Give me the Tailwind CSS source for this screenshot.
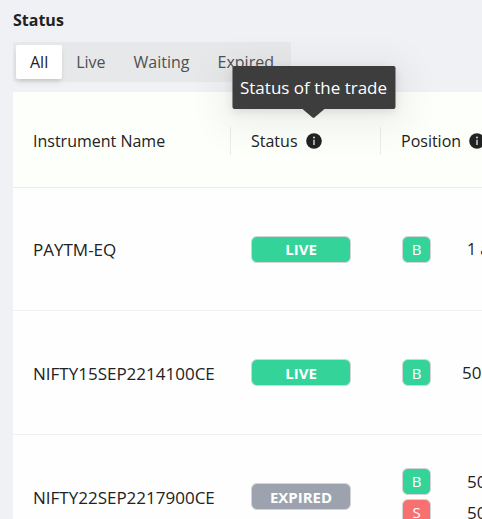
<!DOCTYPE html>
<html lang="en">
<head>
<meta charset="utf-8">
<meta name="viewport" content="width=device-width, initial-scale=1">
<title>Trades</title>
<script src="https://cdn.jsdelivr.net/npm/@tailwindcss/browser@4"></script>
</head>
<body class="h-screen overflow-hidden bg-[#f0f1f5] font-['Open_Sans','Noto_Sans',sans-serif] text-[17px] leading-7 text-[#222]">
<main class="pt-[6px] pl-[13px]">
  <fieldset>
    <legend class="text-base leading-7 font-bold">Status</legend>
    <div class="mt-2 inline-flex rounded-xs bg-[#e6e8e9] p-[3px] align-top text-base text-[#505050]">
      <label class="flex h-[34px] cursor-pointer items-center rounded-xs px-[14px] has-checked:bg-white has-checked:text-[#222] has-checked:shadow-md"><input type="radio" name="status" class="sr-only" checked>All</label>
      <label class="flex h-[34px] cursor-pointer items-center rounded-xs px-[14px] has-checked:bg-white has-checked:text-[#222] has-checked:shadow-md"><input type="radio" name="status" class="sr-only">Live</label>
      <label class="flex h-[34px] cursor-pointer items-center rounded-xs px-[14px] has-checked:bg-white has-checked:text-[#222] has-checked:shadow-md"><input type="radio" name="status" class="sr-only">Waiting</label>
      <label class="flex h-[34px] cursor-pointer items-center rounded-xs px-[14px] has-checked:bg-white has-checked:text-[#222] has-checked:shadow-md"><input type="radio" name="status" class="sr-only">Expired</label>
    </div>
  </fieldset>

  <table class="mt-[10px] w-full table-fixed border-separate border-spacing-0 bg-[#fefefe] text-left whitespace-nowrap">
    <colgroup><col class="w-[218px]"><col class="w-[150px]"><col></colgroup>
    <thead class="bg-[#fdfffb] text-base leading-7">
      <tr class="h-24">
        <th class="border-b border-[#ebecec] pt-[2px] pl-5 font-normal"><div class="border-r border-[#ebecec]">Instrument Name</div></th>
        <th class="border-b border-[#ebecec] pt-[2px] pl-5 font-normal">
          <div class="flex items-center gap-2 border-r border-[#ebecec]">Status
            <button type="button" class="relative" aria-label="About status" aria-describedby="status-tip">
              <svg class="block size-4" viewBox="0 0 16 16"><circle cx="8" cy="8" r="7.8" fill="#222"/><circle cx="8" cy="4.6" r="1" fill="#ddd"/><path d="M7.3 6.8h1.4V12H7.3z" fill="#ddd"/></svg>
              <span id="status-tip" role="tooltip" class="absolute bottom-10 left-1/2 -translate-x-1/2 rounded-xs bg-[#3d3d3d] px-2 py-2 text-[17px] leading-[27px] text-white shadow-[0_8px_36px_12px_rgba(0,0,0,0.06),0_3px_10px_rgba(0,0,0,0.10)]">Status of the trade
                <svg class="absolute top-full left-1/2 h-[9px] w-[22px] -translate-x-1/2" viewBox="0 0 22 9"><path d="M0 0h22L12 8.6q-1 .8-2 0z" fill="#3d3d3d"/></svg>
              </span>
            </button>
          </div>
        </th>
        <th class="border-b border-[#ebecec] pt-[2px] pl-5 font-normal">
          <div class="flex items-center gap-2">Position
            <button type="button" class="shrink-0" aria-label="About position">
              <svg class="block size-4" viewBox="0 0 16 16"><circle cx="8" cy="8" r="7.8" fill="#222"/><circle cx="8" cy="4.6" r="1" fill="#ddd"/><path d="M7.3 6.8h1.4V12H7.3z" fill="#ddd"/></svg>
            </button>
          </div>
        </th>
      </tr>
    </thead>
    <tbody>
      <tr class="h-[123px]">
        <td class="border-b border-[#f0f0f0] pt-[2px] pl-5">PAYTM-EQ</td>
        <td class="border-b border-[#f0f0f0] pl-5"><span class="flex h-[27px] w-[100px] items-center justify-center rounded-md border border-[#d4d4d8] bg-[#34d399] text-[15px] font-bold text-white">LIVE</span></td>
        <td class="border-b border-[#f0f0f0] pl-[21px]"><div class="flex items-center gap-9"><span class="flex h-[27px] w-[29px] shrink-0 items-center justify-center rounded-md border border-[#d4d4d8] bg-[#34d399] text-[15px] text-white">B</span><span class="text-base">1 a</span></div></td>
      </tr>
      <tr class="h-[124px]">
        <td class="border-b border-[#f0f0f0] pt-[2px] pl-5">NIFTY15SEP2214100CE</td>
        <td class="border-b border-[#f0f0f0] pl-5"><span class="flex h-[27px] w-[100px] items-center justify-center rounded-md border border-[#d4d4d8] bg-[#34d399] text-[15px] font-bold text-white">LIVE</span></td>
        <td class="border-b border-[#f0f0f0] pl-[21px]"><div class="flex items-center gap-[31px]"><span class="flex h-[27px] w-[29px] shrink-0 items-center justify-center rounded-md border border-[#d4d4d8] bg-[#34d399] text-[15px] text-white">B</span><span>50</span></div></td>
      </tr>
      <tr class="h-[124px]">
        <td class="border-b border-[#f0f0f0] pt-[2px] pl-5">NIFTY22SEP2217900CE</td>
        <td class="border-b border-[#f0f0f0] pl-5"><span class="flex h-[27px] w-[100px] items-center justify-center rounded-md border border-[#d4d4d8] bg-[#9ca3af] text-[15px] font-bold text-white">EXPIRED</span></td>
        <td class="border-b border-[#f0f0f0] pl-[21px]">
          <div class="flex flex-col gap-1">
            <div class="flex items-center gap-9"><span class="flex h-[27px] w-[29px] shrink-0 items-center justify-center rounded-md border border-[#d4d4d8] bg-[#34d399] text-[15px] text-white">B</span><span class="leading-[27px]">50</span></div>
            <div class="flex items-center gap-9"><span class="flex h-[27px] w-[29px] shrink-0 items-center justify-center rounded-md border border-[#d4d4d8] bg-[#f87171] text-[15px] text-white">S</span><span class="leading-[27px]">50</span></div>
          </div>
        </td>
      </tr>
    </tbody>
  </table>
</main>
</body>
</html>
